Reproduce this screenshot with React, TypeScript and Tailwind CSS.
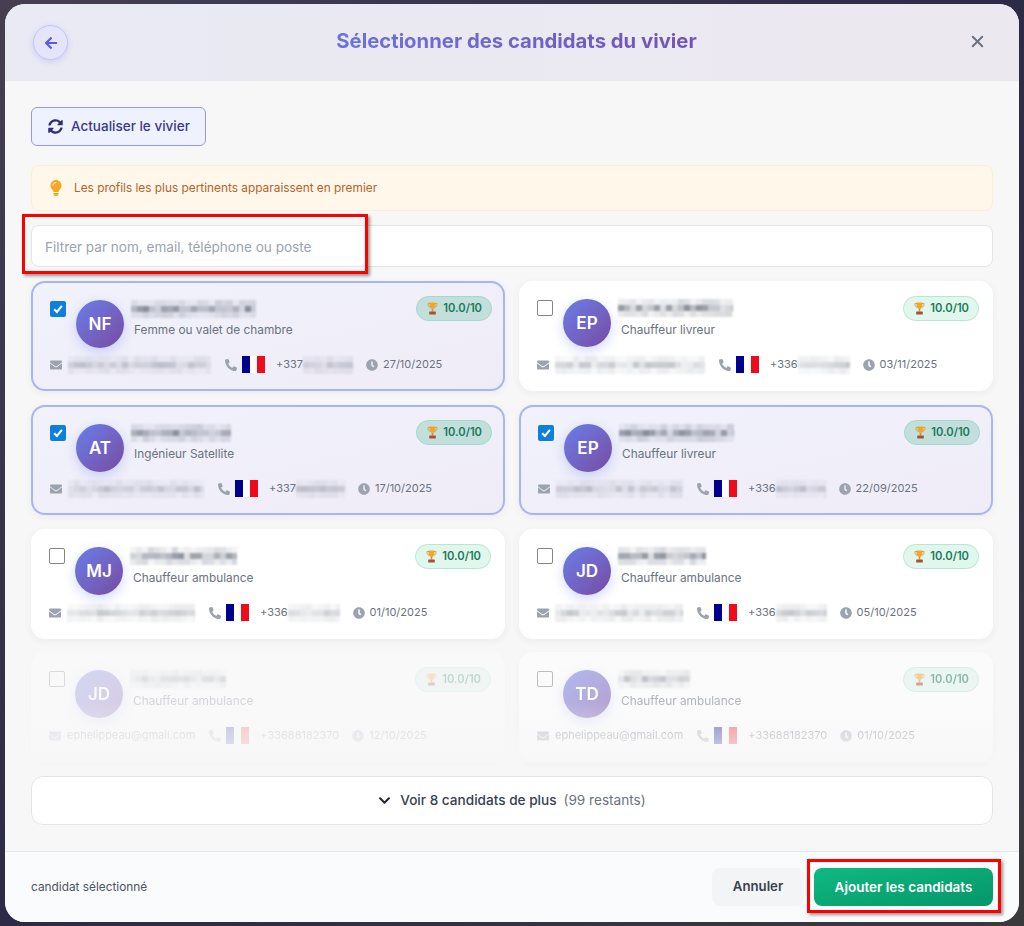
import { X } from 'lucide-react';
import {
  FaArrowLeft,
  FaChevronDown,
  FaClock,
  FaEnvelope,
  FaLightbulb,
  FaPhoneAlt,
  FaSyncAlt,
} from 'react-icons/fa';

type Candidate = {
  initials: string;
  title: string;
  nameW: number;
  emailW: number;
  prefix: string;
  phoneW: number;
  date: string;
  selected?: boolean;
  email?: string;
  phone?: string;
  fade?: string;
  seed: number;
};

const candidates: Candidate[] = [
  { initials: 'NF', title: 'Femme ou valet de chambre', nameW: 125, emailW: 143, prefix: '+337', phoneW: 50, date: '27/10/2025', selected: true, seed: 3 },
  { initials: 'EP', title: 'Chauffeur livreur', nameW: 115, emailW: 150, prefix: '+336', phoneW: 52, date: '03/11/2025', seed: 11 },
  { initials: 'AT', title: 'Ingénieur Satellite', nameW: 100, emailW: 136, prefix: '+337', phoneW: 49, date: '17/10/2025', selected: true, seed: 23 },
  { initials: 'EP', title: 'Chauffeur livreur', nameW: 115, emailW: 127, prefix: '+336', phoneW: 50, date: '22/09/2025', selected: true, seed: 31 },
  { initials: 'MJ', title: 'Chauffeur ambulance', nameW: 107, emailW: 128, prefix: '+336', phoneW: 52, date: '01/10/2025', seed: 47 },
  { initials: 'JD', title: 'Chauffeur ambulance', nameW: 88, emailW: 128, prefix: '+336', phoneW: 51, date: '05/10/2025', seed: 59 },
  { initials: 'JD', title: 'Chauffeur ambulance', nameW: 96, emailW: 0, prefix: '', phoneW: 0, date: '12/10/2025', email: 'ephelippeau@gmail.com', phone: '+33688182370', fade: '-mt-px opacity-[0.25]', seed: 67 },
  { initials: 'TD', title: 'Chauffeur ambulance', nameW: 72, emailW: 0, prefix: '', phoneW: 0, date: '01/10/2025', email: 'ephelippeau@gmail.com', phone: '+33688182370', fade: '-mt-px opacity-50', seed: 71 },
];

// pixelated block standing in for the redacted names, mails and numbers
const Mosaic = ({ w, seed, dark }: { w: number; seed: number; dark?: boolean }) => {
  const cell = 6;
  const rows = 3;
  const cols = Math.ceil(w / cell);
  const rects = [];
  for (let r = 0; r < rows; r++) {
    for (let c = 0; c < cols; c++) {
      const n = Math.abs(Math.sin(seed * 12.9 + c * 78.2 + r * 37.7) * 43758.5) % 1;
      const mid = r === 1 ? 1 : 0.35;
      const a = (dark ? 0.2 + n * 0.6 : 0.12 + n * 0.28) * mid;
      rects.push(
        <rect key={`${r}-${c}`} x={c * cell} y={r * cell} width={cell} height={cell} fill="#6b7280" opacity={a} />,
      );
    }
  }
  return (
    <svg width={w} height={rows * cell} viewBox={`0 0 ${w} ${rows * cell}`} className="shrink-0 blur-[0.8px]">
      {rects}
    </svg>
  );
};

const Flag = () => (
  <svg width="23" height="17" viewBox="0 0 23 17" className="shrink-0">
    <rect x="0" y="0" width="8" height="17" fill="#00008f" />
    <rect x="8" y="0" width="7" height="17" fill="#ffffff" />
    <rect x="15" y="0" width="8" height="17" fill="#ef0b1c" />
  </svg>
);

const Trophy = () => (
  <svg width="11" height="13" viewBox="0 0 11 13" className="shrink-0">
    <path d="M1 1.500h9v1.200c0 1.500-1 2.500-2.400 2.600M1 1.500v1.200c0 1.500 1 2.500 2.400 2.600" fill="none" stroke="#e2a12f" strokeWidth="1" />
    <path d="M2.600 .6h5.800v3.200c0 2-1.200 3.200-2.900 3.200S2.600 5.800 2.600 3.800z" fill="#f0a52e" />
    <rect x="4.700" y="7" width="1.600" height="2.500" fill="#d8922a" />
    <rect x="2.200" y="9.400" width="6.600" height="3.100" rx=".5" fill="#a5503a" />
  </svg>
);

const CheckBox = ({ checked }: { checked?: boolean }) =>
  checked ? (
    <span className="mt-px flex h-4 w-4 shrink-0 items-center justify-center rounded-[2px] bg-[#0f7fdc]">
      <svg width="12" height="12" viewBox="0 0 12 12">
        <path d="M2.200 6.300 4.900 9 9.900 2.900" fill="none" stroke="#fff" strokeWidth="2.100" />
      </svg>
    </span>
  ) : (
    <span className="mt-px h-4 w-4 shrink-0 rounded-[2px] border border-[#858585] bg-white" />
  );

const CandidateCard = ({ c }: { c: Candidate }) => (
  <div
    className={`flex h-[110px] flex-col rounded-[14px] ${c.fade ?? ''} ${
      c.selected
        ? 'border-2 border-[#a9b5f2] bg-gradient-to-br from-[#f0f2fc] to-[#f0ecf7] px-[17px] pt-[17px] shadow-[0_2px_8px_rgba(0,0,0,0.05)]'
        : 'bg-white p-[18px] shadow-[0_2px_8px_rgba(0,0,0,0.05)]'
    }`}
  >
    <div className="flex items-start gap-[10px]">
      <CheckBox checked={c.selected} />
      <div className="flex h-12 w-12 shrink-0 items-center justify-center rounded-full bg-gradient-to-br from-[#667eea] to-[#764ba2] pt-px text-[17px] font-semibold text-white shadow-[0_4px_12px_rgba(102,126,234,0.3)]">
        {c.initials}
      </div>
      <div className="min-w-0 flex-1">
        <div className="-ml-[3px] h-[18px]">
          <Mosaic w={c.nameW} seed={c.seed} dark />
        </div>
        <p className={`text-[11.85px] leading-[18px] text-[#6b7280] ${c.selected ? 'mt-[3px]' : 'mt-1'}`}>{c.title}</p>
      </div>
      <div
        className={`flex h-[25px] items-center gap-[5px] rounded-full border pl-[10px] pr-[9px] text-[11.2px] font-semibold text-[#177a5b] ${
          c.selected ? '-mr-[6px] -mt-1 border-[#a3d8cd] bg-[#c2dfdc]' : '-mr-1 -mt-[3px] border-[#b5e8d2] bg-[#e1f6ed]'
        }`}
      >
        <Trophy />
        10.0/10
      </div>
    </div>
    <div className={`flex h-[17px] items-center text-[11px] text-[#6b7280] ${c.selected ? 'mt-2' : 'mt-[9px]'}`}>
      <FaEnvelope className="mr-[6px] h-3 w-3 shrink-0 text-[#9ca3af]" />
      {c.email ? <span>{c.email}</span> : <Mosaic w={c.emailW} seed={c.seed + 2} />}
      <FaPhoneAlt className="ml-[14px] mr-[5px] h-3 w-3 shrink-0 text-[#9ca3af]" />
      <Flag />
      <span className="ml-[11px]">{c.phone ?? c.prefix}</span>
      {c.phoneW > 0 && <Mosaic w={c.phoneW} seed={c.seed + 4} />}
      <FaClock className="ml-[13px] mr-[5px] h-3 w-3 shrink-0 text-[#9ca3af]" />
      <span>{c.date}</span>
    </div>
  </div>
);

export default function App() {
  return (
    <div className="h-[926px] w-[1024px] overflow-hidden bg-gradient-to-br from-[#463f50] via-[#2d2a48] to-[#3a3a3c] pb-1 pl-[5px] pr-[5px] pt-1 font-['Inter',sans-serif]">
      <div className="flex h-[918px] w-[1014px] flex-col overflow-hidden rounded-[20px] bg-[#f7f7f8]">
        <header className="flex h-[77px] shrink-0 items-center justify-between bg-gradient-to-r from-[#e9eaf4] to-[#ece8f0] pl-[28px] pr-[32px]">
          <button className="flex h-[35px] w-[35px] items-center justify-center rounded-full border border-[#c3c5f3] bg-[#e4e5fa] text-[#5a5be0] shadow-[0_2px_6px_rgba(102,102,234,0.2)]">
            <FaArrowLeft className="h-[14px] w-[14px]" />
          </button>
          <h1 className="-ml-[3px] -mt-[2px] bg-gradient-to-r from-[#6a72e2] to-[#7253b4] bg-clip-text text-[20.3px] font-bold text-transparent">
            Sélectionner des candidats du vivier
          </h1>
          <X className="-mt-[2px] h-[19px] w-[19px] text-[#6b7280]" strokeWidth={2.5} />
        </header>

        <main className="flex flex-1 flex-col px-[26px] pt-[26px]">
          <button className="flex h-[39px] w-[175px] items-center gap-2 rounded-md border border-[#9b96ea] bg-[#eef1fe] pl-[16px] text-[13.5px] font-medium text-[#3b3a8c]">
            <FaSyncAlt className="h-[15px] w-[15px] text-[#2f2d7c]" />
            Actualiser le vivier
          </button>

          <div className="mt-[19px] flex h-[46px] items-center gap-[11px] rounded-lg border border-[#fdeed3] bg-[#fff7ea] pl-[17px] text-[11.85px] text-[#b0652c]">
            <FaLightbulb className="h-4 w-[14px] text-[#f5a623]" />
            <span className="pt-px">Les profils les plus pertinents apparaissent en premier</span>
          </div>

          <div className="relative mt-[14px]">
            <input
              readOnly
              placeholder="Filtrer par nom, email, téléphone ou poste"
              className="h-[42px] w-full rounded-lg border-[1.5px] border-[#e4e5e9] bg-white px-[13px] pt-px text-[13.55px] outline-none placeholder:text-[#9ca3af]"
            />
            <div className="absolute -left-[9px] -top-[11px] h-[60px] w-[346px] border-[3px] border-[#f00] shadow-[2px_2px_3px_rgba(0,0,0,0.4)]" />
          </div>

          <div className="relative mt-[14px] grid grid-cols-2 gap-[14px]">
            {candidates.map((c) => (
              <CandidateCard key={c.seed} c={c} />
            ))}
            <div className="pointer-events-none absolute inset-x-0 bottom-0 h-[60px] bg-gradient-to-b from-transparent to-[#f7f7f8]/80" />
          </div>

          <button className="mt-[14px] flex h-[49px] items-center justify-center rounded-xl border-[1.5px] border-[#e4e5e9] bg-white text-[13.6px] font-medium text-[#374151]">
            <FaChevronDown className="mr-[9px] h-[13px] w-[13px] text-[#1f2937]" />
            Voir 8 candidats de plus
            <span className="ml-[7px] font-normal text-[#6b7280]">(99 restants)</span>
          </button>
        </main>

        <footer className="flex h-[71px] shrink-0 items-center justify-between border-t border-[#e5e7eb] bg-[#fafbfd] pl-[26px] pr-[26px]">
          <span className="pt-px text-[11.85px] text-[#4b5563]">candidat sélectionné</span>
          <div className="flex items-center gap-[10px]">
            <button className="h-[38px] w-[92px] rounded-lg bg-[#f3f4f6] text-[13.2px] font-semibold text-[#374151]">
              Annuler
            </button>
            <div className="relative">
              <button className="h-[38px] w-[179px] rounded-lg bg-gradient-to-br from-[#10b981] to-[#059669] text-[13.5px] font-semibold text-white">
                Ajouter les candidats
              </button>
              <div className="absolute -left-[7px] -top-[9px] h-[54px] w-[194px] border-[3px] border-[#f00] shadow-[2px_2px_3px_rgba(0,0,0,0.4)]" />
            </div>
          </div>
        </footer>
      </div>
    </div>
  );
}
